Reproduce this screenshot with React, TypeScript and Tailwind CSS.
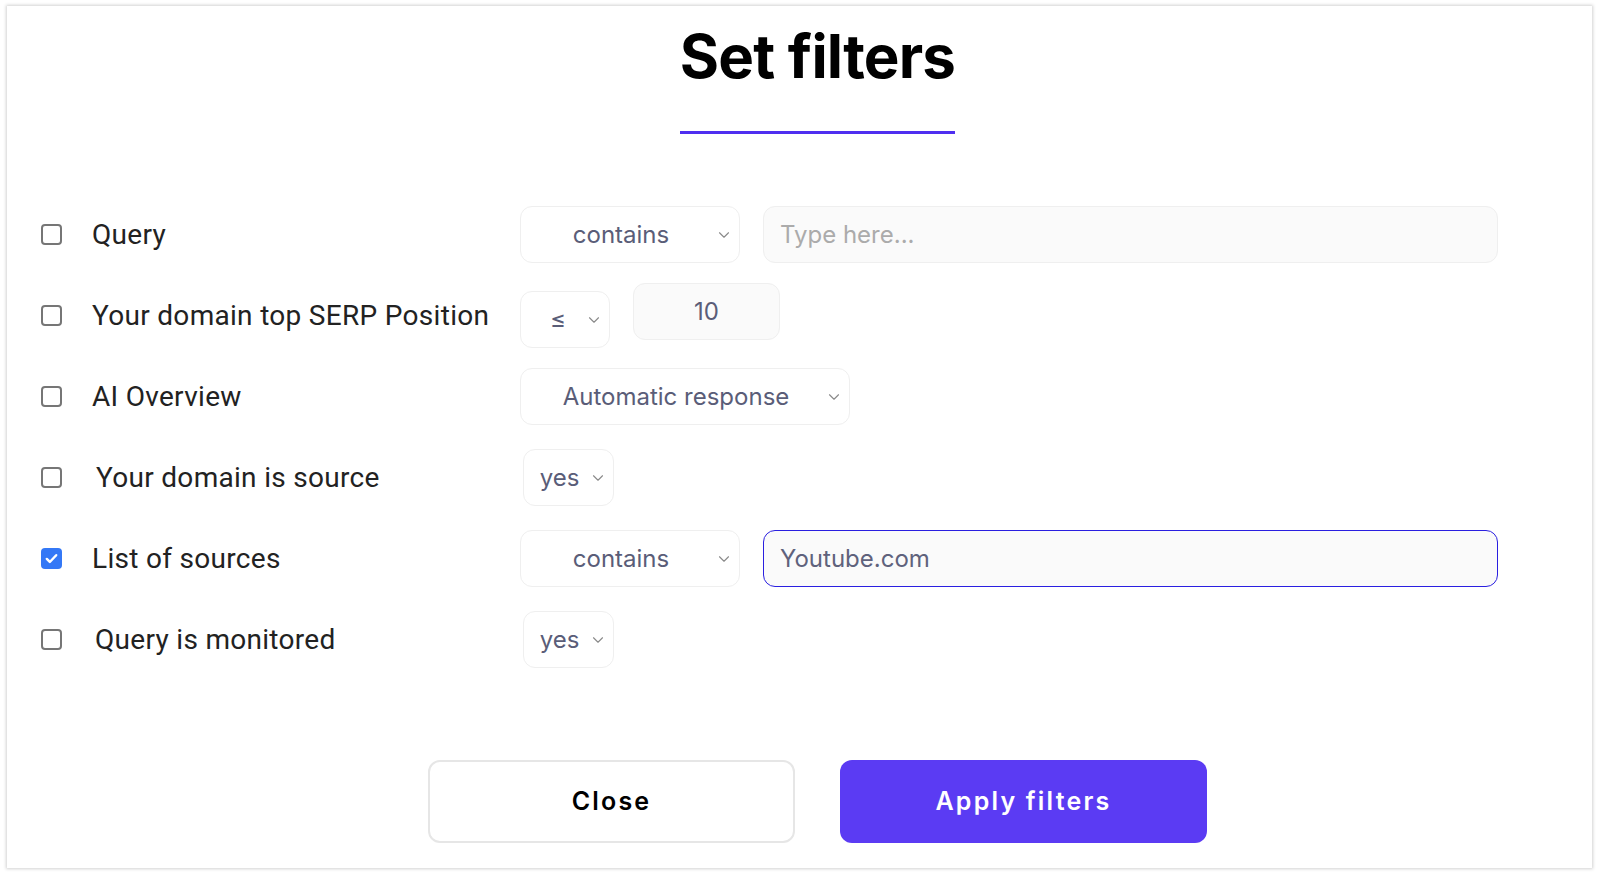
import { ChevronDown } from 'lucide-react';

type Row = {
  label: string;
  checked?: boolean;
  labelGap?: string;
  controls: React.ReactNode;
};

function Checkbox({ checked }: { checked?: boolean }) {
  if (checked) {
    return (
      <div className="w-[21px] h-[21px] rounded-[4px] bg-[#3478f6] flex items-center justify-center shrink-0">
        <svg width="15" height="15" viewBox="0 0 16 16" fill="none">
          <path d="M3 8.5l3.2 3.2L13 4.5" stroke="white" strokeWidth="2.6" strokeLinecap="round" strokeLinejoin="round" />
        </svg>
      </div>
    );
  }
  return <div className="w-[21px] h-[21px] rounded-[4px] border-2 border-[#767676] bg-white shrink-0" />;
}

function Select({ value, width, shift = '', textPad = 'pr-[18px]' }: { value: string; width: string; shift?: string; textPad?: string }) {
  return (
    <div
      className={`relative h-[57px] ${width} ${shift} rounded-[12px] border border-[#efefef] bg-white flex items-center justify-center ${textPad} text-[24px] text-[#5a5d78] shrink-0`}
    >
      <span>{value}</span>
      <ChevronDown size={18} strokeWidth={1.5} className="absolute right-[6px] top-[19px] text-[#8a8a8a]" />
    </div>
  );
}

function TextInput({ value, placeholder, active }: { value?: string; placeholder?: string; active?: boolean }) {
  return (
    <div
      className={`h-[57px] w-[735px] rounded-[12px] bg-[#fafafa] flex items-center px-[16px] text-[24px] ${
        active ? 'border-[1.5px] border-[#2a1fe0]' : 'border border-[#efefef]'
      }`}
    >
      {value ? <span className="text-[#5f627c]">{value}</span> : <span className="text-[#ababab]">{placeholder}</span>}
    </div>
  );
}

const rows: Row[] = [
  {
    label: 'Query',
    controls: (
      <>
        <Select value="contains" width="w-[220px]" />
        <TextInput placeholder="Type here..." />
      </>
    ),
  },
  {
    label: 'Your domain top SERP Position',
    controls: (
      <>
        <div className="mt-[8px]">
          <Select value="≤" width="w-[90px]" textPad="pr-[14px]" />
        </div>
        <div className="h-[57px] w-[147px] -mt-[8px] rounded-[12px] border border-[#efefef] bg-[#fafafa] flex items-center justify-center text-[24px] text-[#5a5d78]">
          10
        </div>
      </>
    ),
  },
  {
    label: 'AI Overview',
    controls: <Select value="Automatic response" width="w-[330px]" textPad="pr-[18px]" />,
  },
  {
    label: 'Your domain is source',
    labelGap: 'ml-[34px]',
    controls: <Select value="yes" width="w-[91px]" shift="ml-[3px]" textPad="pr-[18px]" />,
  },
  {
    label: 'List of sources',
    checked: true,
    controls: (
      <>
        <Select value="contains" width="w-[220px]" />
        <TextInput value="Youtube.com" active />
      </>
    ),
  },
  {
    label: 'Query is monitored',
    labelGap: 'ml-[33px]',
    controls: <Select value="yes" width="w-[91px]" shift="ml-[3px]" textPad="pr-[18px]" />,
  },
];

export default function App() {
  return (
    <div className="w-[1600px] h-[876px] bg-white p-[6px_8px_8px_7px] font-['Inter',sans-serif]">
      <div className="h-[862px] bg-white shadow-[0_0_3px_1px_rgba(0,0,0,0.18)] flex flex-col pt-[20px]">
        <div className="pl-[36px] flex flex-col items-center">
          <h1 className="text-[60px] leading-[60px] font-bold text-black tracking-[-0.8px]">Set filters</h1>
          <div className="mt-[45px] w-[275px] h-[3px] bg-[#4f2ff0]" />
        </div>

        <div className="mt-[72px] flex flex-col gap-[24px] pl-[34px]">
          {rows.map((r) => (
            <div key={r.label} className="flex items-center h-[57px]">
              <div className="w-[479px] flex items-center shrink-0">
                <Checkbox checked={r.checked} />
                <span
                  className={`${r.labelGap ?? 'ml-[30px]'} text-[28px] tracking-[0.3px] text-[#222] font-['Roboto',sans-serif] whitespace-nowrap`}
                >
                  {r.label}
                </span>
              </div>
              <div className="flex items-center gap-[23px]">{r.controls}</div>
            </div>
          ))}
        </div>

        <div className="mt-[92px] pl-[36px] flex justify-center gap-[45px]">
          <button className="w-[367px] h-[83px] rounded-[12px] border-2 border-[#e6e6e6] bg-white text-[25px] font-semibold tracking-[2.2px] text-black">
            Close
          </button>
          <button className="w-[367px] h-[83px] rounded-[12px] bg-[#5b3bf3] text-[25px] font-semibold tracking-[2.2px] text-white">
            Apply filters
          </button>
        </div>
      </div>
    </div>
  );
}
